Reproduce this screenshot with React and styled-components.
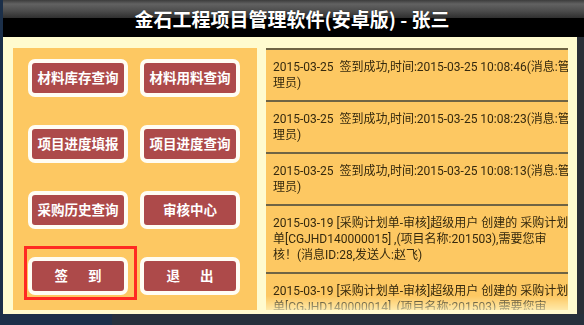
import React from "react";
import styled, { createGlobalStyle } from "styled-components";

const Global = createGlobalStyle`
  html, body { margin: 0; padding: 0; }
  body { font-family: "Roboto", "Noto Sans CJK SC", sans-serif; }
`;

const Screen = styled.div`
  width: 584px;
  height: 325px;
  overflow: hidden;
  display: flex;
  flex-direction: column;
  background: linear-gradient(90deg, #1b2f49 0 112px, #26303c 112px);
`;

const Window = styled.div`
  margin-left: 3px;
  height: 314px;
  display: flex;
  flex-direction: column;
  background: #1b2f49;
`;

const TitleBar = styled.div`
  height: 37px;
  flex: none;
  display: flex;
  justify-content: center;
  align-items: flex-start;
  padding-right: 3px;
  background: linear-gradient(
    to bottom,
    #3c3c3c 0,
    #626262 4px,
    #4c4c4c 11px,
    #2f2f2f 18px,
    #000 18px,
    #000 37px
  );
`;

const Title = styled.h1`
  margin: 0;
  padding-top: 7px;
  font-family: "Noto Sans CJK SC", sans-serif;
  font-weight: 700;
  font-size: 19px;
  line-height: 24px;
  color: #fff;
  text-shadow: 0 0 1px rgba(0, 0, 0, 0.6);
  white-space: nowrap;
`;

const Body = styled.div`
  flex: 1;
  display: flex;
  gap: 9px;
  padding: 11px 9px 4px 10px;
  background: #fffbcf;
  border-right: 7px solid #2a2f37;
  min-height: 0;
`;

const MenuPanel = styled.div`
  width: 244px;
  flex: none;
  background: #fdc862;
  display: grid;
  grid-template-columns: 100px 100px;
  grid-auto-rows: 38px;
  column-gap: 12px;
  row-gap: 28px;
  padding: 11px 0 0 15px;
  box-sizing: border-box;
  align-content: start;
`;

const ButtonSlot = styled.div`
  position: relative;
`;

const MenuButton = styled.button`
  width: 100%;
  height: 100%;
  margin: 0;
  padding: 0;
  box-sizing: border-box;
  border: 4px solid #fffdf4;
  border-radius: 7px;
  background: #ad4a4a;
  color: #fff;
  font-family: "Noto Sans CJK SC", sans-serif;
  font-weight: 700;
  font-size: 13.5px;
  line-height: 1;
  word-spacing: ${(p) => (p.$spaced ? "17px" : "normal")};
  white-space: pre;
  cursor: pointer;
`;

const Highlight = styled.div`
  position: absolute;
  top: -11px;
  left: -4px;
  right: -9px;
  bottom: -5px;
  border: 3px solid #ff2a22;
  pointer-events: none;
`;

const MessageList = styled.ul`
  flex: 1;
  margin: 0;
  padding: 0;
  list-style: none;
  background: #fdc862;
  border-top: 2px solid #6f6444;
  overflow: hidden;
  -webkit-mask-image: linear-gradient(to bottom, #000 calc(100% - 14px), rgba(0,0,0,0.35) 100%);
  mask-image: linear-gradient(to bottom, #000 calc(100% - 14px), rgba(0,0,0,0.35) 100%);
`;

const Message = styled.li`
  padding: 9px 7px;
  border-bottom: 2px solid #6f6444;
  font-family: "Roboto", "Noto Sans CJK SC", sans-serif;
  font-size: 12px;
  line-height: 16px;
  color: #35290e;
`;

const Line = styled.div`
  white-space: pre;
`;

const buttons = [
  { label: "材料库存查询" },
  { label: "材料用料查询" },
  { label: "项目进度填报" },
  { label: "项目进度查询" },
  { label: "采购历史查询" },
  { label: "审核中心" },
  { label: "签 到", spaced: true, marked: true },
  { label: "退 出", spaced: true },
];

const messages = [
  ["2015-03-25  签到成功,时间:2015-03-25 10:08:46(消息:管", "理员)"],
  ["2015-03-25  签到成功,时间:2015-03-25 10:08:23(消息:管", "理员)"],
  ["2015-03-25  签到成功,时间:2015-03-25 10:08:13(消息:管", "理员)"],
  [
    "2015-03-19 [采购计划单-审核]超级用户 创建的 采购计划",
    "单[CGJHD140000015] ,(项目名称:201503),需要您审",
    "核！(消息ID:28,发送人:赵飞)",
  ],
  [
    "2015-03-19 [采购计划单-审核]超级用户 创建的 采购计划",
    "单[CGJHD140000014] ,(项目名称:201503),需要您审",
    "核！(消息ID:27,发送人:赵飞)",
  ],
];

export default function App() {
  return (
    <>
      <Global />
      <Screen>
        <Window>
          <TitleBar>
            <Title>金石工程项目管理软件(安卓版) - 张三</Title>
          </TitleBar>
          <Body>
            <MenuPanel>
              {buttons.map((b) => (
                <ButtonSlot key={b.label}>
                  <MenuButton $spaced={b.spaced}>{b.label}</MenuButton>
                  {b.marked && <Highlight />}
                </ButtonSlot>
              ))}
            </MenuPanel>
            <MessageList>
              {messages.map((lines, i) => (
                <Message key={i}>
                  {lines.map((l, j) => (
                    <Line key={j}>{l}</Line>
                  ))}
                </Message>
              ))}
            </MessageList>
          </Body>
        </Window>
      </Screen>
    </>
  );
}
